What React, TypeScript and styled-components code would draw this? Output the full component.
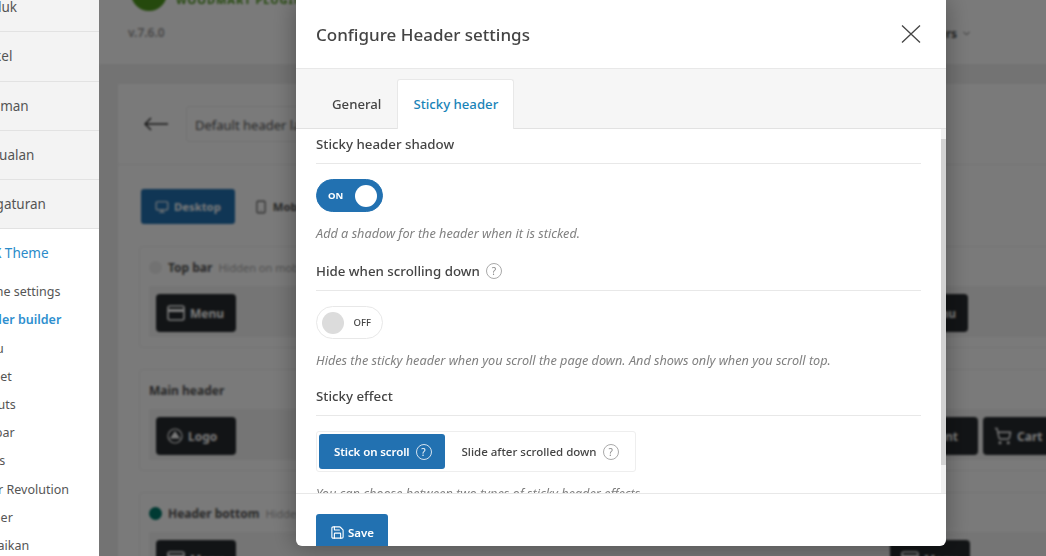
import React from "react";
import styled, { createGlobalStyle } from "styled-components";
import { ChevronDown, Monitor, Save, ShoppingCart, Smartphone } from "lucide-react";

const GlobalStyle = createGlobalStyle`
  html, body {
    margin: 0;
    padding: 0;
    width: 1046px;
    height: 556px;
    overflow: hidden;
    background: #fff;
    font-family: "Noto Sans", "Open Sans", sans-serif;
  }
  * {
    box-sizing: border-box;
  }
`;

const Root = styled.div`
  position: relative;
  display: flex;
  width: 1046px;
  height: 556px;
  overflow: hidden;
`;

/* left admin menu, scrolled a little to the left in the screenshot */
const Sidebar = styled.aside`
  flex: 0 0 99px;
  height: 556px;
  overflow: hidden;
  background: #fff;
  white-space: nowrap;
`;

const SideTop = styled.ul`
  list-style: none;
  margin: -17px 0 0;
  padding: 0;
`;

const SideTopItem = styled.li`
  height: 49.25px;
  line-height: 48px;
  background: #f3f3f3;
  border-bottom: 1px solid #e2e2e2;
  color: #555;
  font-size: 13.5px;
  text-indent: -28.5px;
`;

const SideGroup = styled.div`
  padding: 14px 0 0;
  color: #2a8bc9;
  font-size: 13.5px;
  line-height: 20px;
  text-indent: -27px;
`;

const SideSub = styled.ul`
  list-style: none;
  margin: 15px 0 0;
  padding: 0;
`;

const SideSubItem = styled.li<{ $active?: boolean }>`
  height: 28.2px;
  line-height: 28px;
  font-size: 12.5px;
  text-indent: -30px;
  color: ${(p) => (p.$active ? "#2f90cf" : "#555")};
  font-weight: ${(p) => (p.$active ? 600 : 400)};
`;

const Main = styled.main`
  position: relative;
  flex: 1;
  height: 556px;
  overflow: hidden;
`;

const Blurred = styled.div`
  width: 1000px;
  height: 600px;
  background: #f0f0f0;
  filter: blur(1.2px);
`;

const Scrim = styled.div`
  position: absolute;
  inset: 0;
  background: rgba(0, 0, 0, 0.52);
`;

const PageHeader = styled.header`
  position: relative;
  height: 64px;
  padding: 24px 0 0 29px;
  background: #fff;
  color: #999;
  font-size: 12px;
  font-weight: 600;
`;

const LogoMark = styled.div`
  position: absolute;
  left: 32px;
  top: -25px;
  width: 36px;
  height: 36px;
  border-radius: 50%;
  background: #4f9a1d;
`;

const LogoWords = styled.div`
  position: absolute;
  left: 77px;
  top: -8px;
  color: #4f9a1d;
  font-size: 11px;
  font-weight: 700;
  letter-spacing: 1px;
  white-space: nowrap;
`;

const HeaderMenu = styled.div`
  position: absolute;
  left: 817px;
  top: 25px;
  display: flex;
  align-items: center;
  gap: 4px;
  color: #555;
  font-size: 12px;
  font-weight: 700;
  white-space: nowrap;
`;

const Card = styled.section`
  width: 960px;
  margin: 20px 0 0 19px;
  background: #fff;
`;

const CardTop = styled.div`
  display: flex;
  align-items: center;
  gap: 18px;
  height: 81px;
  padding: 0 0 0 26px;
  border-bottom: 1px solid #f0f0f0;
`;

const LayoutInput = styled.div`
  width: 300px;
  height: 36px;
  padding: 0 8px;
  line-height: 36px;
  border: 1px solid #eee;
  border-radius: 3px;
  color: #555;
  font-size: 13px;
`;

const CardBody = styled.div`
  padding: 24px 0 0 21px;
`;

const DeviceTabs = styled.div`
  display: flex;
  gap: 5px;
  align-items: center;
  margin-left: 2px;
`;

const DeviceTab = styled.div<{ $on?: boolean }>`
  display: flex;
  align-items: center;
  gap: 5px;
  height: 35px;
  padding: 0 14px;
  border-radius: 3px;
  font-size: 11.3px;
  font-weight: 700;
  background: ${(p) => (p.$on ? "#2271b1" : "transparent")};
  color: ${(p) => (p.$on ? "#fff" : "#555")};
`;

const Panel = styled.div`
  width: 920px;
  height: 102px;
  margin-top: 22px;
  padding: 10px 9px 0;
  border: 1px solid #f0f0f0;
  border-radius: 4px;
  & + & {
    margin-top: 21px;
  }
`;

const PanelTitle = styled.div`
  display: flex;
  align-items: center;
  gap: 6px;
  height: 20px;
  color: #555;
  font-size: 12px;
  font-weight: 700;
`;

const PanelNote = styled.span`
  color: #aaa;
  font-size: 11px;
  font-weight: 400;
`;

const Dot = styled.span<{ $color: string }>`
  width: 13px;
  height: 13px;
  border-radius: 50%;
  background: ${(p) => p.$color};
`;

const Row = styled.div<{ $trail: number }>`
  display: flex;
  justify-content: space-between;
  width: 920px;
  height: 51px;
  margin-top: 9px;
  padding: 8px ${(p) => p.$trail}px 0 7px;
  background: #f4f4f4;
`;

const Cluster = styled.div`
  display: flex;
  gap: 5px;
`;

const Chip = styled.div`
  display: flex;
  align-items: center;
  gap: 5px;
  width: 80px;
  height: 38px;
  padding: 0 11px;
  background: #272b2f;
  border-radius: 4px;
  color: #fff;
  font-size: 12px;
  font-weight: 700;
`;

const Modal = styled.div`
  position: absolute;
  left: 296px;
  top: 0;
  display: flex;
  flex-direction: column;
  width: 650px;
  height: 546px;
  overflow: hidden;
  background: #fff;
  border-radius: 0 0 6px 6px;
  box-shadow: 0 0 26px rgba(0, 0, 0, 0.35);
`;

const ModalHead = styled.div`
  display: flex;
  flex: 0 0 69px;
  align-items: center;
  justify-content: space-between;
  padding: 0 25px 0 20px;
  border-bottom: 1px solid #e8e8e8;
`;

const ModalTitle = styled.h2`
  margin: 0;
  color: #444;
  font-size: 17px;
  font-weight: 500;
`;

const TabBar = styled.div`
  display: flex;
  flex: 0 0 60px;
  align-items: flex-end;
  padding-left: 20px;
  background: #f6f6f6;
  border-bottom: 1px solid #e2e2e2;
`;

const Tab = styled.div<{ $on?: boolean }>`
  position: relative;
  height: 50px;
  padding: 0 15px;
  line-height: 48px;
  font-size: 13.2px;
  font-weight: 500;
  margin-bottom: -1px;
  color: ${(p) => (p.$on ? "#1a84b8" : "#444")};
  background: ${(p) => (p.$on ? "#fff" : "transparent")};
  border: 1px solid ${(p) => (p.$on ? "#e8e8e8" : "transparent")};
  border-bottom: 0;
  border-radius: 3px 3px 0 0;
`;

const Scroller = styled.div`
  position: relative;
  flex: 1;
  min-height: 0;
  padding: 0 25px 0 20px;
  overflow: hidden;
`;

const ScrollTrack = styled.div`
  position: absolute;
  top: 0;
  right: 0;
  bottom: 0;
  width: 5px;
  background: #f1f1f1;
`;

const ScrollThumb = styled.div`
  position: absolute;
  top: 10px;
  right: 0;
  width: 5px;
  height: 326px;
  background: #d2d2d2;
`;

const SectionTitle = styled.div`
  display: flex;
  align-items: center;
  gap: 6px;
  height: 35px;
  padding-bottom: 4px;
  border-bottom: 1px solid #e8e8e8;
  color: #444;
  font-size: 13.3px;
  font-weight: 500;
`;

const Toggle = styled.div<{ $on?: boolean }>`
  display: flex;
  align-items: center;
  justify-content: space-between;
  flex-direction: ${(p) => (p.$on ? "row" : "row-reverse")};
  width: 67px;
  height: 33px;
  margin-top: 15px;
  padding: ${(p) => (p.$on ? "0 5px 0 11px" : "0 11px 0 5px")};
  border-radius: 17px;
  font-size: 9.5px;
  font-weight: ${(p) => (p.$on ? 700 : 500)};
  color: ${(p) => (p.$on ? "#fff" : "#444")};
  background: ${(p) => (p.$on ? "#2271b1" : "#fff")};
  border: 1px solid ${(p) => (p.$on ? "#2271b1" : "#e8e8e8")};
`;

const Knob = styled.span<{ $on?: boolean }>`
  width: 22px;
  height: 22px;
  border-radius: 50%;
  background: ${(p) => (p.$on ? "#fff" : "#dcdcdc")};
`;

const Hint = styled.p<{ $after: number }>`
  margin: 12px 0 ${(p) => p.$after}px;
  height: 18px;
  line-height: 18px;
  color: #808080;
  font-size: 12.7px;
  font-style: italic;
  white-space: nowrap;
`;

const Segments = styled.div`
  display: flex;
  align-items: center;
  gap: 2px;
  width: 320px;
  height: 41px;
  margin-top: 15px;
  padding: 2px;
  border: 1px solid #eee;
  border-radius: 3px;
`;

const Segment = styled.div<{ $on?: boolean }>`
  display: flex;
  align-items: center;
  gap: 6px;
  height: 35px;
  padding: 0 13px 0 15px;
  border-radius: 3px;
  font-size: 11.5px;
  white-space: nowrap;
  font-weight: ${(p) => (p.$on ? 600 : 500)};
  letter-spacing: ${(p) => (p.$on ? "-0.1px" : "0")};
  color: ${(p) => (p.$on ? "#fff" : "#444")};
  background: ${(p) => (p.$on ? "#2271b1" : "transparent")};
`;

const Help = styled.span<{ $light?: boolean }>`
  display: inline-flex;
  align-items: center;
  justify-content: center;
  width: 16px;
  height: 16px;
  border-radius: 50%;
  font-size: 10px;
  font-weight: 400;
  letter-spacing: 0;
  color: ${(p) => (p.$light ? "#fff" : "#888")};
  border: 1px solid ${(p) => (p.$light ? "#d5e3ef" : "#aaa")};
`;

const ModalFoot = styled.div`
  flex: 0 0 53px;
  min-height: 0;
  padding: 20px 0 0 20px;
  border-top: 1px solid #e8e8e8;
`;

const SaveButton = styled.button`
  display: flex;
  align-items: center;
  gap: 3px;
  width: 72px;
  height: 36px;
  padding: 0 0 0 14px;
  background: #2271b1;
  border: 0;
  border-radius: 3px;
  color: #fff;
  font-family: inherit;
  font-size: 11.5px;
  font-weight: 600;
`;

function CloseGlyph() {
  return (
    <svg width="20" height="20" viewBox="0 0 20 20" fill="none" stroke="#444" strokeWidth="1.3">
      <path d="M1 1.5 L19 18.5 M19 1.5 L1 18.5" />
    </svg>
  );
}

function BackArrow() {
  return (
    <svg width="24" height="14" viewBox="0 0 24 14" fill="none" stroke="#333" strokeWidth="1.5">
      <path d="M24 7 H1 M7 1 L1 7 L7 13" />
    </svg>
  );
}

function MenuGlyph() {
  return (
    <svg width="18" height="18" viewBox="0 0 18 18" fill="none" stroke="#fff" strokeWidth="1.6">
      <rect x="1" y="2" width="16" height="14" rx="2" />
      <path d="M1 6.5 H17" strokeWidth="3" />
    </svg>
  );
}

function LogoGlyph() {
  return (
    <svg width="16" height="16" viewBox="0 0 16 16" fill="none" stroke="#fff" strokeWidth="1.2">
      <circle cx="8" cy="8" r="7" />
      <path d="M8 4 L12 10 H4 Z" fill="#fff" />
    </svg>
  );
}

const topItems = ["Produk", "Artikel", "Halaman", "Penjualan", "Pengaturan"];

const subItems = [
  "Theme settings",
  "Header builder",
  "Menu",
  "Widget",
  "Layouts",
  "Sidebar",
  "Pages",
  "Slider Revolution",
  "Banner",
  "Perbaikan",
];

export default function App() {
  return (
    <>
      <GlobalStyle />
      <Root>
        <Sidebar>
          <SideTop>
            {topItems.map((label) => (
              <SideTopItem key={label}>{label}</SideTopItem>
            ))}
          </SideTop>
          <SideGroup>WPX Theme</SideGroup>
          <SideSub>
            {subItems.map((label) => (
              <SideSubItem key={label} $active={label === "Header builder"}>
                {label}
              </SideSubItem>
            ))}
          </SideSub>
        </Sidebar>
        <Main>
          <Blurred>
            <PageHeader>
              <LogoMark />
              <LogoWords>WOODMART PLUGIN THEME</LogoWords>
              v.7.6.0
              <HeaderMenu>
                Others
                <ChevronDown size={11} />
              </HeaderMenu>
            </PageHeader>
            <Card>
              <CardTop>
                <BackArrow />
                <LayoutInput>Default header layout</LayoutInput>
              </CardTop>
              <CardBody>
                <DeviceTabs>
                  <DeviceTab $on>
                    <Monitor size={14} />
                    Desktop
                  </DeviceTab>
                  <DeviceTab>
                    <Smartphone size={14} />
                    Mobile
                  </DeviceTab>
                </DeviceTabs>
                <Panel>
                  <PanelTitle>
                    <Dot $color="#eee" />
                    Top bar
                    <PanelNote>Hidden on mobile</PanelNote>
                  </PanelTitle>
                  <Row $trail={101}>
                    <Chip>
                      <MenuGlyph />
                      Menu
                    </Chip>
                    <Chip>
                      <MenuGlyph />
                      Menu
                    </Chip>
                  </Row>
                </Panel>
                <Panel>
                  <PanelTitle>Main header</PanelTitle>
                  <Row $trail={6}>
                    <Chip>
                      <LogoGlyph />
                      Logo
                    </Chip>
                    <Cluster>
                      <Chip>Account</Chip>
                      <Chip>
                        <ShoppingCart size={18} />
                        Cart
                      </Chip>
                    </Cluster>
                  </Row>
                </Panel>
                <Panel>
                  <PanelTitle>
                    <Dot $color="#00796b" />
                    Header bottom
                    <PanelNote>Hidden on mobile</PanelNote>
                  </PanelTitle>
                  <Row $trail={99}>
                    <Chip>
                      <MenuGlyph />
                      Menu
                    </Chip>
                    <Chip>
                      <MenuGlyph />
                      Menu
                    </Chip>
                  </Row>
                </Panel>
              </CardBody>
            </Card>
          </Blurred>
          <Scrim />
        </Main>
        <Modal>
          <ModalHead>
            <ModalTitle>Configure Header settings</ModalTitle>
            <CloseGlyph />
          </ModalHead>
          <TabBar>
            <Tab>General</Tab>
            <Tab $on>Sticky header</Tab>
          </TabBar>
          <Scroller>
            <SectionTitle>Sticky header shadow</SectionTitle>
            <Toggle $on>
              ON
              <Knob $on />
            </Toggle>
            <Hint $after={14}>Add a shadow for the header when it is sticked.</Hint>
            <SectionTitle>
              Hide when scrolling down
              <Help>?</Help>
            </SectionTitle>
            <Toggle>
              OFF
              <Knob />
            </Toggle>
            <Hint $after={12}>Hides the sticky header when you scroll the page down. And shows only when you scroll top.</Hint>
            <SectionTitle>Sticky effect</SectionTitle>
            <Segments>
              <Segment $on>
                Stick on scroll
                <Help $light>?</Help>
              </Segment>
              <Segment>
                Slide after scrolled down
                <Help>?</Help>
              </Segment>
            </Segments>
            <Hint $after={13}>You can choose between two types of sticky header effects.</Hint>
            <ScrollTrack />
            <ScrollThumb />
          </Scroller>
          <ModalFoot>
            <SaveButton>
              <Save size={15} strokeWidth={1.8} />
              Save
            </SaveButton>
          </ModalFoot>
        </Modal>
      </Root>
    </>
  );
}
